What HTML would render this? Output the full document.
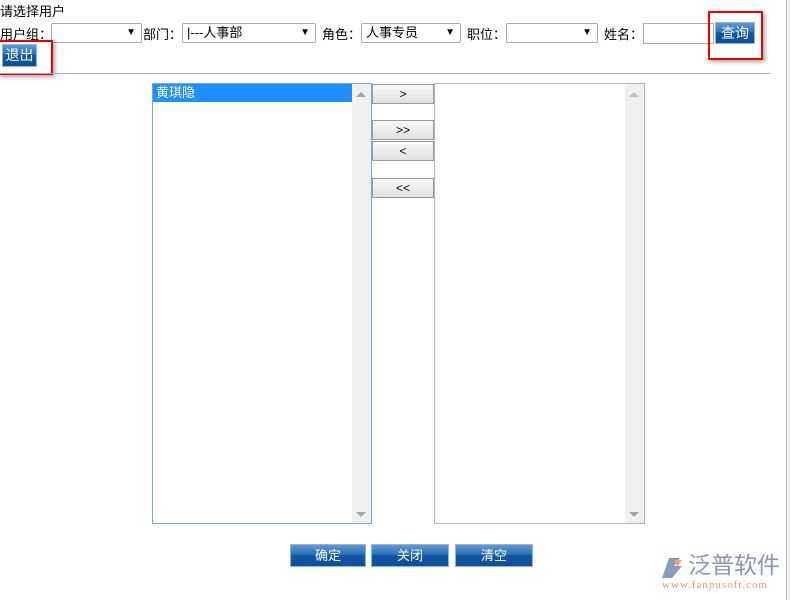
<!DOCTYPE html>
<html><head><meta charset="utf-8"><style>
*{margin:0;padding:0;box-sizing:border-box}
body{width:791px;height:600px;position:relative;background:#fff;overflow:hidden;font:13px "Liberation Sans","Noto Sans CJK SC",sans-serif;color:#000}
.a{position:absolute}
.sel{position:absolute;height:20px;border:1px solid #aaa;border-radius:2px;background:#fff;font-size:13px;line-height:18px;padding-left:4px}
.sel:after{content:"▼";position:absolute;right:5px;top:0;font-size:10px}
.bb{position:absolute;background:linear-gradient(#5d9bd3,#2c6fb5 45%,#0f56a3 50%,#0d4f9a);color:#fff;text-align:center;border:1px solid #8cb8e0}
.mv{position:absolute;left:372px;width:62px;height:20px;border:1px solid #999;background:linear-gradient(#fafafa,#e0e0e0);text-align:center;font-size:12px;line-height:18px}
.red{position:absolute;border:2px solid #e00;box-shadow:2px 2px 4px rgba(0,0,0,.35)}
</style></head><body>
<div class="a" style="left:0;top:1px">请选择用户</div>
<div class="a" style="left:0;top:24px">用户组：</div>
<div class="sel" style="left:51px;top:23px;width:91px"></div>
<div class="a" style="left:143px;top:24px">部门：</div>
<div class="sel" style="left:182px;top:23px;width:134px">|---人事部</div>
<div class="a" style="left:322px;top:24px">角色：</div>
<div class="sel" style="left:361px;top:23px;width:100px">人事专员</div>
<div class="a" style="left:467px;top:24px">职位：</div>
<div class="sel" style="left:506px;top:23px;width:92px"></div>
<div class="a" style="left:604px;top:24px">姓名：</div>
<div class="a" style="left:643px;top:23px;width:71px;height:21px;border:1px solid #aaa"></div>
<div class="bb" style="left:715px;top:22px;width:40px;height:22px;line-height:20px;font-size:14px">查询</div>
<div class="red" style="left:708px;top:11px;width:55px;height:49px"></div>
<div class="bb" style="left:2px;top:44px;width:35px;height:23px;line-height:21px;font-size:14px">退出</div>
<div class="red" style="left:-2px;top:40px;width:55px;height:35px"></div>
<div class="a" style="left:0;top:73px;width:770px;height:1px;background:#aaa"></div>
<div class="a" style="left:786px;top:0;width:5px;height:600px;background:#f0f0f0;border-left:1px solid #bbb"></div>

<div class="a" style="left:152px;top:83px;width:220px;height:441px;border:1px solid #7ea6dc"></div>
<div class="a" style="left:153px;top:84px;width:199px;height:18px;background:#1e90ff;color:#fff;line-height:18px;padding-left:3px">黄琪隐</div>
<div class="a" style="left:352px;top:84px;width:19px;height:439px;background:#f0f0f0"></div>
<div class="a" style="left:356px;top:92px;border:5px solid transparent;border-bottom:5px solid #a3a3a3;border-top:0"></div>
<div class="a" style="left:356px;top:512px;border:5px solid transparent;border-top:5px solid #a3a3a3;border-bottom:0"></div>

<div class="a" style="left:434px;top:83px;width:211px;height:441px;border:1px solid #b5b5b5"></div>
<div class="a" style="left:625px;top:84px;width:19px;height:439px;background:#f0f0f0"></div>
<div class="a" style="left:629px;top:92px;border:5px solid transparent;border-bottom:5px solid #c0c0c0;border-top:0"></div>
<div class="a" style="left:629px;top:512px;border:5px solid transparent;border-top:5px solid #a3a3a3;border-bottom:0"></div>

<div class="mv" style="top:84px">&gt;</div>
<div class="mv" style="top:120px">&gt;&gt;</div>
<div class="mv" style="top:141px">&lt;</div>
<div class="mv" style="top:178px">&lt;&lt;</div>

<div class="bb" style="left:290px;top:544px;width:76px;height:23px;line-height:21px">确定</div>
<div class="bb" style="left:371px;top:544px;width:78px;height:23px;line-height:21px">关闭</div>
<div class="bb" style="left:455px;top:544px;width:78px;height:23px;line-height:21px">清空</div>

<svg class="a" style="left:660px;top:556px" width="28" height="24"><path d="M9 2 L20 2 L14 10 L22 10 L12 22 L2 22 Z" fill="#8b9ab8"/><path d="M14 4 L22 4 L17 11 Z" fill="#e9a27e"/></svg>
<div class="a" style="left:688px;top:550px;font-size:23px;color:#8a96b3;letter-spacing:0;line-height:30px">泛普软件</div>
<div class="a" style="left:662px;top:579px;font-size:11px;color:#e19a78;font-family:'Liberation Serif',serif;letter-spacing:1px">www.fanpusoft.com</div>
</body></html>
